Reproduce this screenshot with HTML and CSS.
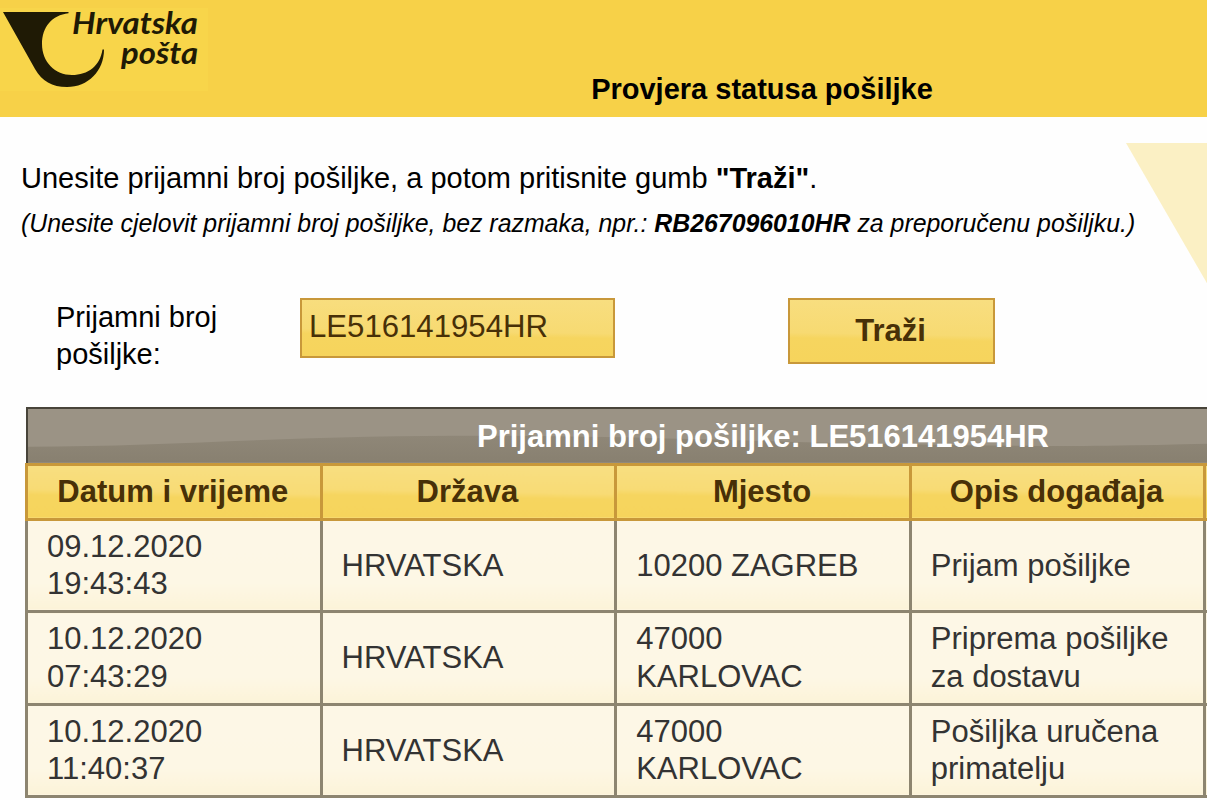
FILE: index.html
```html
<!DOCTYPE html>
<html lang="hr">
<head>
    <meta charset="UTF-8">
    <meta name="viewport" content="width=device-width, initial-scale=1.0">
    <title>Provjera statusa pošiljke</title>
    <link rel="stylesheet" href="styles.css">
</head>
<body>
    <div class="page">
        <header class="header">
            <svg class="logo" width="208" height="91" viewBox="0 0 208 91">
                <path fill="#1f1a05" d="M3 12H68.500V13.200C52 15 42 27 42 44C42 62 55 75 72 75C88 75 100 66 102.500 49.500H104C104 71 88 87 67 87C52 87 42 81 35 69Z"/>
                <text class="logo-text" x="72" y="34" textLength="126" lengthAdjust="spacingAndGlyphs">Hrvatska</text>
                <text class="logo-text" x="121" y="63.500" textLength="77" lengthAdjust="spacingAndGlyphs">pošta</text>
            </svg>
            <h1 class="title">Provjera statusa pošiljke</h1>
        </header>

        <main class="content">
            <svg class="horn" width="398" height="265" viewBox="0 0 398 265">
                <path fill="#fbf0c4" d="M0 0H398V265H153Z"/>
            </svg>

            <p class="intro">Unesite prijamni broj pošiljke, a potom pritisnite gumb <b>"Traži"</b>.</p>
            <p class="hint">(Unesite cjelovit prijamni broj pošiljke, bez razmaka, npr.: <b>RB267096010HR</b> za preporučenu pošiljku.)</p>

            <form class="search">
                <label class="search-label" for="broj">Prijamni broj pošiljke:</label>
                <input class="search-input" id="broj" type="text" value="LE516141954HR">
                <button class="search-button" type="button">Traži</button>
            </form>

            <table class="results">
                <thead>
                    <tr class="results-title">
                        <th colspan="5">
                            <svg class="shine" viewBox="0 0 1474 54" preserveAspectRatio="none">
                                <defs>
                                    <linearGradient id="shade" x1="0" y1="0" x2="0" y2="1">
                                        <stop offset="0" stop-color="#8f8778"/>
                                        <stop offset="1" stop-color="#888070"/>
                                    </linearGradient>
                                </defs>
                                <path fill="url(#shade)" d="M0 38C120 38 230 30 340 28C500 25 620 29 760 33C880 36 1000 38 1080 37C1200 36 1300 30 1474 29V54H0Z"/>
                            </svg>
                            <span>Prijamni broj pošiljke: LE516141954HR</span>
                        </th>
                    </tr>
                    <tr class="results-head">
                        <th>Datum i vrijeme</th>
                        <th>Država</th>
                        <th>Mjesto</th>
                        <th>Opis događaja</th>
                        <th></th>
                    </tr>
                </thead>
                <tbody>
                    <tr>
                        <td>09.12.2020 19:43:43</td>
                        <td>HRVATSKA</td>
                        <td>10200 ZAGREB</td>
                        <td>Prijam pošiljke</td>
                        <td></td>
                    </tr>
                    <tr>
                        <td>10.12.2020 07:43:29</td>
                        <td>HRVATSKA</td>
                        <td>47000 KARLOVAC</td>
                        <td>Priprema pošiljke za dostavu</td>
                        <td></td>
                    </tr>
                    <tr>
                        <td>10.12.2020 11:40:37</td>
                        <td>HRVATSKA</td>
                        <td>47000 KARLOVAC</td>
                        <td>Pošiljka uručena primatelju</td>
                        <td></td>
                    </tr>
                </tbody>
            </table>
        </main>
    </div>
</body>
</html>
```
FILE: styles.css
```css
* {
    box-sizing: border-box;
}
body {
    margin: 0;
    height: 800px;
    overflow: hidden;
    background: #fefefe;
    color: #000;
    font-family: "Liberation Sans", Arial, sans-serif;
}
.page {
    width: 1524px;
}

/* header */
.header {
    display: grid;
    height: 117px;
    background: #f7d148;
}
.logo,
.title {
    grid-area: 1 / 1;
}
.logo {
    background: linear-gradient(transparent 8px, #f8d54a 8px);
}
.logo-text {
    font: italic 700 30px Lato, sans-serif;
    fill: #1f1a05;
}
.title {
    align-self: end;
    margin: 0 0 11px;
    font-size: 29px;
    line-height: 34px;
    text-align: center;
}

/* content */
.content {
    position: relative;
    padding: 43px 22px 0 21px;
}
.horn {
    position: absolute;
    top: 26px;
    left: 1126px;
}
.intro,
.hint {
    position: relative;
    margin: 0;
    white-space: nowrap;
}
.intro {
    font-size: 29px;
    line-height: 36px;
}
.hint {
    margin-top: 11px;
    font-size: 24.86px;
    line-height: 32px;
    font-style: italic;
}

/* search form */
.search {
    display: grid;
    grid-template-columns: 244px 488px 207px;
    align-items: start;
    height: 109px;
    margin-top: 59px;
    padding-left: 35px;
}
.search-label {
    width: 200px;
    padding-top: 1px;
    font-size: 29px;
    line-height: 37px;
}
.search-input,
.search-button {
    border: 2px solid #c8983a;
    border-radius: 0;
    background: linear-gradient(181deg, #f8de80 0%, #f7da72 55%, #f6d55f 63%, #f6d45c 100%);
    color: #483007;
    font-family: inherit;
    font-size: 31px;
}
.search-input {
    width: 315px;
    height: 60px;
    padding: 0 7px 3px;
    font-size: 31.15px;
}
.search-button {
    width: 207px;
    height: 66px;
    padding: 0 2px 1px 0;
    font-weight: bold;
}

/* results */
.results {
    position: relative;
    width: 1476px;
    margin-left: 4px;
    border-collapse: collapse;
    table-layout: fixed;
    font-size: 31px;
    line-height: 37.3px;
}
.results-title th {
    position: relative;
    height: 56px;
    padding: 2px 0 0;
    border: 2px solid #48443a;
    background: #9b9385;
    color: #fff;
}
.results-title span {
    position: relative;
}
.shine {
    position: absolute;
    inset: 0;
    width: 100%;
    height: 100%;
}
.results-head th {
    height: 55px;
    padding: 0 2px 0 0;
    border: 3px solid #c8983a;
    background: linear-gradient(181deg, #f8df83 0%, #f8db75 50%, #f6d55f 60%, #f6d45c 100%);
    color: #483007;
}
.results td {
    height: 92.5px;
    padding: 0 19px;
    border: 3px solid #8d8570;
    background: linear-gradient(#fdf7e6 0%, #fdf7e5 70%, #fcf3d8 100%);
    color: #333;
}
```
